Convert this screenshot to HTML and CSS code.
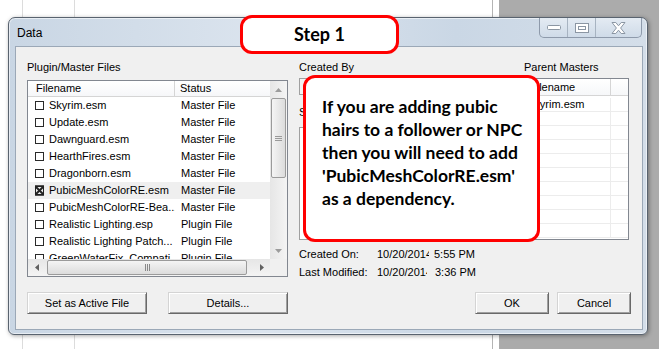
FILE: index.html
```html
<!DOCTYPE html>
<html lang="en">
<head>
    <meta charset="UTF-8">
    <title>Data</title>
    <link rel="stylesheet" href="styles.css">
</head>
<body>

<div class="desktop">
    <div class="window">
        <div class="titlebar">
            <span class="title">Data</span>
            <div class="caption">
                <span class="cap">
                    <svg width="14" height="6" viewBox="0 0 14 6"><rect x="0.5" y="0.5" width="13" height="4" rx="1" fill="#fff" stroke="#8b96a3"/></svg>
                </span>
                <span class="cap">
                    <svg width="14" height="10" viewBox="0 0 14 10"><rect x="0.5" y="0.5" width="13" height="9" fill="#fff" stroke="#8b96a3"/><rect x="3.5" y="3.5" width="7" height="3" fill="none" stroke="#8b96a3"/></svg>
                </span>
                <span class="cap cap-close">
                    <svg width="15" height="12" viewBox="0 0 15 12"><path d="M1 0.5H4.8L7.5 3.8L10.2 0.5H14L9.6 6L14 11.5H10.2L7.5 8.2L4.8 11.5H1L5.4 6Z" fill="#fff" stroke="#8b96a3"/></svg>
                </span>
            </div>
        </div>

        <div class="client">
            <div class="panes">
                <div class="files-pane">
                    <div class="label">Plugin/Master Files</div>
                    <div class="listbox">
                        <div class="list-view">
                            <div class="list-head">
                                <span class="col-name">Filename</span>
                                <span class="col-status">Status</span>
                            </div>
                            <div class="list-row"><span class="name"><i class="check"></i>Skyrim.esm</span><span class="status">Master File</span></div>
                            <div class="list-row"><span class="name"><i class="check"></i>Update.esm</span><span class="status">Master File</span></div>
                            <div class="list-row"><span class="name"><i class="check"></i>Dawnguard.esm</span><span class="status">Master File</span></div>
                            <div class="list-row"><span class="name"><i class="check"></i>HearthFires.esm</span><span class="status">Master File</span></div>
                            <div class="list-row"><span class="name"><i class="check"></i>Dragonborn.esm</span><span class="status">Master File</span></div>
                            <div class="list-row selected"><span class="name">
                                <svg class="check-x" width="11" height="11" viewBox="0 0 11 11"><rect x="1.5" y="1.5" width="8" height="8" fill="none" stroke="#222"/><path d="M1.5 1.5L9.5 9.5M9.5 1.5L1.5 9.5" stroke="#222" stroke-width="2"/><path d="M1 1H10M1 10H10" stroke="#222" stroke-width="1.6"/></svg>PubicMeshColorRE.esm</span><span class="status">Master File</span></div>
                            <div class="list-row"><span class="name"><i class="check"></i>PubicMeshColorRE-Bea...</span><span class="status">Master File</span></div>
                            <div class="list-row"><span class="name"><i class="check"></i>Realistic Lighting.esp</span><span class="status">Plugin File</span></div>
                            <div class="list-row"><span class="name"><i class="check"></i>Realistic Lighting Patch...</span><span class="status">Plugin File</span></div>
                            <div class="list-row"><span class="name"><i class="check"></i>GreenWaterFix_Compati...</span><span class="status">Plugin File</span></div>
                        </div>

                        <div class="vscroll">
                            <span class="arrow"><svg width="7" height="4" viewBox="0 0 7 4"><path d="M0 4L3.5 0L7 4Z" fill="#9c9c9c"/></svg></span>
                            <div class="track">
                                <div class="thumb thumb-v">
                                    <svg width="7" height="5" viewBox="0 0 7 5"><path d="M0 0.5H7M0 2.5H7M0 4.5H7" stroke="#9a9a9a"/></svg>
                                </div>
                            </div>
                            <span class="arrow"><svg width="7" height="4" viewBox="0 0 7 4"><path d="M0 0L3.5 4L7 0Z" fill="#9c9c9c"/></svg></span>
                        </div>

                        <div class="hscroll">
                            <span class="arrow"><svg width="4" height="7" viewBox="0 0 4 7"><path d="M4 0L0 3.5L4 7Z" fill="#606060"/></svg></span>
                            <div class="track">
                                <div class="thumb thumb-h">
                                    <svg width="5" height="7" viewBox="0 0 5 7"><path d="M0.5 0V7M2.5 0V7M4.5 0V7" stroke="#8a8a8a"/></svg>
                                </div>
                            </div>
                            <span class="arrow"><svg width="4" height="7" viewBox="0 0 4 7"><path d="M0 0L4 3.5L0 7Z" fill="#606060"/></svg></span>
                        </div>

                        <div class="corner"></div>
                    </div>
                </div>

                <div class="info-pane">
                    <div class="info-top">
                        <div class="info-main">
                            <div class="label">Created By</div>
                            <div class="field"></div>
                            <div class="label summary-label">Summary</div>
                            <div class="field textarea"></div>
                        </div>
                        <div class="masters">
                            <div class="label masters-label">Parent Masters</div>
                            <div class="masters-list">
                                <div class="masters-head"><span class="m-name">Filename</span><span class="m-extra"></span></div>
                                <div class="masters-body">
                                    <div class="m-row"><span class="m-name">Skyrim.esm</span><span class="m-extra"></span></div>
                                    <div class="m-row"><span class="m-name"></span><span class="m-extra"></span></div>
                                    <div class="m-row"><span class="m-name"></span><span class="m-extra"></span></div>
                                    <div class="m-row"><span class="m-name"></span><span class="m-extra"></span></div>
                                    <div class="m-row"><span class="m-name"></span><span class="m-extra"></span></div>
                                    <div class="m-row"><span class="m-name"></span><span class="m-extra"></span></div>
                                    <div class="m-row"><span class="m-name"></span><span class="m-extra"></span></div>
                                    <div class="m-row"><span class="m-name"></span><span class="m-extra"></span></div>
                                    <div class="m-row"><span class="m-name"></span><span class="m-extra"></span></div>
                                    <div class="m-row"><span class="m-name"></span><span class="m-extra"></span></div>
                                </div>
                            </div>
                        </div>
                    </div>

                    <div class="dates">
                        <div class="date-row"><span class="date-label">Created On:</span><span class="date-day clip-part">10/20/2014</span><span>5:55 PM</span></div>
                        <div class="date-row"><span class="date-label">Last Modified:</span><span class="date-day clip-full">10/20/2014</span><span>3:36 PM</span></div>
                    </div>
                </div>
            </div>

            <div class="buttons">
                <div class="btn-group btn-group-left">
                    <button class="btn btn-wide">Set as Active File</button>
                    <button class="btn btn-wide">Details...</button>
                </div>
                <div class="btn-group">
                    <button class="btn btn-small">OK</button>
                    <button class="btn btn-small">Cancel</button>
                </div>
            </div>
        </div>
    </div>

    <div class="callout callout-step">Step 1</div>
    <div class="callout callout-note">If you are adding pubic<br>hairs to a follower or NPC<br>then you will need to add<br>'PubicMeshColorRE.esm'<br>as a dependency.</div>
</div>

</body>
</html>
```

FILE: styles.css
```css
body {
    margin: 0;
    font-family: "Liberation Sans", Arial, sans-serif;
    font-size: 11px;
    color: #000;
}
.desktop {
    position: relative;
    width: 659px;
    height: 349px;
    overflow: hidden;
    background:
        linear-gradient(to right, transparent 22px, #dcdcdc 22px, #dcdcdc 23px, transparent 23px),
        linear-gradient(to right, transparent 74px, #dcdcdc 74px, #dcdcdc 75px, transparent 75px),
        linear-gradient(to right, #fff 492px, #b4b4b4 492px, #b4b4b4 493px, #fff 493px, #fff 499px, #ababab 499px);
}

/* dialog window */
.window {
    position: absolute;
    left: 8px;
    top: 17px;
    width: 640px;
    height: 318px;
    box-sizing: border-box;
    border: 1px solid #59636f;
    border-radius: 7px 7px 6px 6px;
    background: linear-gradient(to right, #c9d6e4, #dbe4ee 40%, #cad7e5 70%, #d4dee9);
    box-shadow: inset 0 0 0 1px rgba(255, 255, 255, 0.55), 1px 1px 4px rgba(0, 0, 0, 0.35);
    padding: 0 4px 4px 6px;
    display: flex;
    flex-direction: column;
}
.titlebar {
    height: 28px;
    display: flex;
    justify-content: space-between;
    align-items: flex-start;
}
.title {
    padding: 8px 0 0 2px;
    font-size: 12px;
}
.caption {
    display: flex;
    height: 19px;
    margin-right: 1px;
    border: 1px solid #8e9aab;
    border-top: none;
    border-radius: 0 0 5px 5px;
    overflow: hidden;
    background: linear-gradient(#e4ebf3, #cfdbe8);
}
.cap {
    display: flex;
    align-items: center;
    justify-content: center;
    width: 27px;
    border-left: 1px solid #a7b3c1;
}
.cap:first-child {
    border-left: none;
}
.cap-close {
    width: 45px;
}

.client {
    flex: 1;
    background: #f0f0f0;
    border: 1px solid #9ba8b7;
    padding: 14px 11px 0;
    display: flex;
    flex-direction: column;
}
.panes {
    display: flex;
    gap: 11px;
    height: 220px;
}
.label {
    height: 13px;
    line-height: 13px;
    white-space: nowrap;
}

/* plugin list */
.files-pane {
    width: 261px;
    display: flex;
    flex-direction: column;
}
.listbox {
    margin-top: 6px;
    height: 197px;
    box-sizing: border-box;
    border: 1px solid #828790;
    background: #fff;
    display: grid;
    grid-template-columns: 1fr 17px;
    grid-template-rows: 1fr 17px;
}
.list-view {
    overflow: hidden;
}
.list-head {
    display: flex;
    height: 15px;
    line-height: 15px;
    background: linear-gradient(#fff, #f6f7f9);
    border-bottom: 1px solid #d5d5d5;
}
.col-name {
    width: 147px;
    box-sizing: border-box;
    padding-left: 8px;
    border-right: 1px solid #d5d5d5;
}
.col-status {
    padding-left: 5px;
}
.list-row {
    display: flex;
    height: 17px;
    line-height: 17px;
    white-space: nowrap;
}
.list-row.selected {
    background: #efefef;
}
.name {
    width: 147px;
    box-sizing: border-box;
    display: flex;
    align-items: center;
    padding-left: 7px;
    overflow: hidden;
}
.status {
    padding-left: 6px;
}
.check {
    width: 9px;
    height: 9px;
    box-sizing: border-box;
    border: 1px solid #2a2a2a;
    margin-right: 5px;
    flex: none;
}
.check-x {
    margin-left: -1px;
    margin-right: 4px;
    flex: none;
}

/* scrollbars */
.vscroll, .hscroll {
    display: flex;
    background: #ececec;
}
.vscroll {
    flex-direction: column;
    background: linear-gradient(to right, #e6e6e6, #f4f4f4);
}
.hscroll {
    background: linear-gradient(#e6e6e6, #f4f4f4);
}
.arrow {
    flex: none;
    width: 17px;
    height: 17px;
    display: flex;
    align-items: center;
    justify-content: center;
}
.track {
    flex: 1;
    display: flex;
}
.thumb {
    box-sizing: border-box;
    border: 1px solid #9b9b9b;
    border-radius: 2px;
    display: flex;
    align-items: center;
    justify-content: center;
}
.thumb-v {
    width: 15px;
    height: 80px;
    margin-left: 1px;
    background: linear-gradient(to right, #f5f5f5, #dcdcdc);
}
.thumb-h {
    width: 200px;
    height: 15px;
    margin: 1px 0 0 2px;
    background: linear-gradient(#f5f5f5, #dcdcdc);
}
.corner {
    background: #f0f0f0;
}

/* details side */
.info-pane {
    width: 330px;
    display: flex;
    flex-direction: column;
}
.info-top {
    display: flex;
    gap: 8px;
}
.info-main {
    width: 215px;
}
.field {
    margin-top: 4px;
    height: 17px;
    box-sizing: border-box;
    border: 1px solid #a0a0a0;
    background: #f4f4f4;
}
.summary-label {
    margin-top: 11px;
}
.field.textarea {
    margin-top: 8px;
    height: 113px;
    background: #fff;
}
.masters {
    flex: 1;
}
.masters-label {
    padding-left: 2px;
}
.masters-list {
    margin-top: 4px;
    height: 162px;
    box-sizing: border-box;
    border: 1px solid #828790;
    background: #fff;
    overflow: hidden;
}
.masters-head {
    display: flex;
    height: 16px;
    line-height: 16px;
    background: linear-gradient(#fff, #f6f7f9);
    border-bottom: 1px solid #d5d5d5;
}
.masters-head .m-name {
    padding-left: 7px;
    border-right: 1px solid #d5d5d5;
}
.masters-body {
    padding-top: 2px;
}
.m-row {
    display: flex;
    height: 13px;
    line-height: 13px;
    border-bottom: 1px solid #ececec;
}
.m-name {
    width: 88px;
    box-sizing: border-box;
    padding-left: 4px;
    border-right: 1px solid #ececec;
    white-space: nowrap;
}
.m-extra {
    flex: 1;
}
.dates {
    margin-top: 5px;
}
.date-row {
    display: flex;
    line-height: 18px;
    white-space: nowrap;
}
.date-label {
    width: 78px;
}
.date-day {
    overflow: hidden;
}
.clip-part {
    width: 52px;
    margin-right: 5px;
}
.clip-full {
    width: 50px;
    margin-right: 8px;
}

/* buttons */
.buttons {
    margin-top: 11px;
    display: flex;
    justify-content: space-between;
}
.btn-group {
    display: flex;
    gap: 8px;
}
.btn-group-left {
    gap: 21px;
}
.btn {
    height: 22px;
    padding: 0;
    font-family: inherit;
    font-size: 11px;
    color: #000;
    background: #f0f0f0;
    border: 1px solid;
    border-color: #d4d4d4 #696969 #696969 #d4d4d4;
    box-shadow: inset 1px 1px #fff, inset -1px -1px #a0a0a0;
}
.btn-wide {
    width: 120px;
}
.btn-small {
    width: 74px;
}

/* red annotation callouts */
.callout {
    position: absolute;
    box-sizing: border-box;
    border: 3px solid #f00;
    border-radius: 12px;
    background: #fff;
    font-family: Lato, "Open Sans", sans-serif;
    font-weight: 700;
    color: #000;
}
.callout-step {
    left: 240px;
    top: 15px;
    width: 159px;
    height: 39px;
    font-size: 18px;
    line-height: 33px;
    text-align: center;
}
.callout-note {
    left: 303px;
    top: 75px;
    width: 237px;
    height: 167px;
    padding: 17px 6px 0 16px;
    font-size: 17.5px;
    line-height: 23px;
    white-space: nowrap;
}
```
